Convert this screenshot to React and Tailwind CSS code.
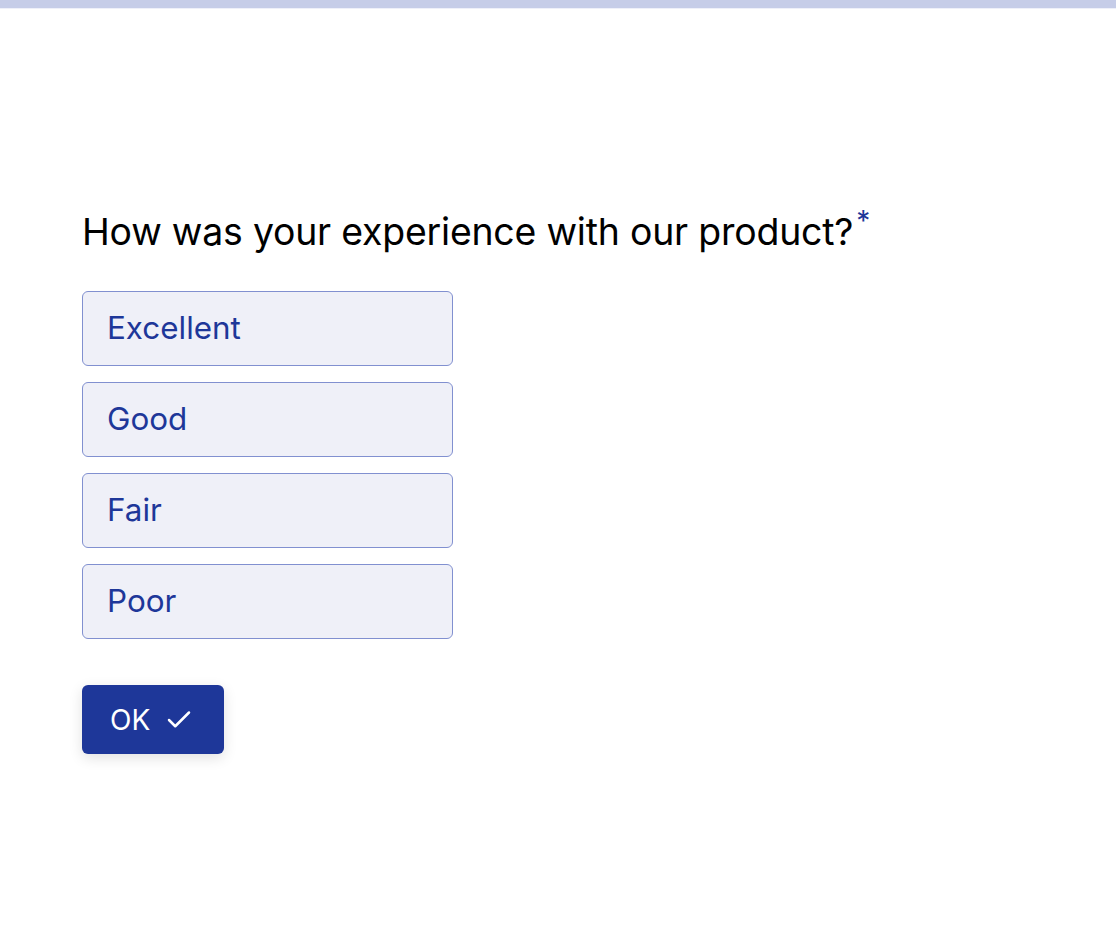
import { Check } from "lucide-react";

const options = ["Excellent", "Good", "Fair", "Poor"];

export default function App() {
  return (
    <div className="min-h-[930px] bg-white" style={{ fontFamily: "Inter, 'Liberation Sans', sans-serif" }}>
      <div className="h-[9px] bg-[#c6cde8] border-b border-[#eef0f9]" />
      <div className="pl-[82px] pt-[201px]">
        <h1 className="text-[37.4px] leading-[44px] text-black tracking-[-0.2px]">
          How was your experience with our product?
          <span className="relative -top-[14px] ml-[3px] text-[28px] leading-none text-[#1e3799]">*</span>
        </h1>
        <div className="mt-[37px] flex flex-col gap-[16px] w-[371px]">
          {options.map((o) => (
            <div
              key={o}
              className="h-[75px] flex items-center px-[24px] rounded-[6px] border border-[#8190d0] bg-[#eff0f8] text-[#1e3799] text-[31.4px]"
            >
              {o}
            </div>
          ))}
        </div>
        <button className="mt-[46px] w-[142px] h-[69px] flex items-center pl-[28px] gap-[14px] rounded-[6px] bg-[#1e3799] text-white text-[28px] shadow-[0_4px_14px_rgba(0,0,0,0.12)]">
          OK
          <Check size={30} strokeWidth={2} />
        </button>
      </div>
    </div>
  );
}
